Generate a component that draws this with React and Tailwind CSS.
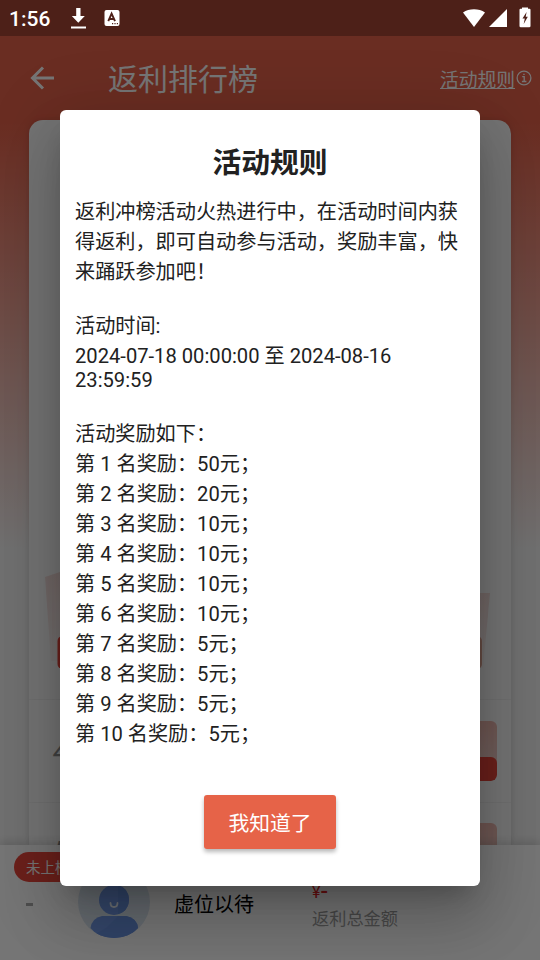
import React from "react";

const rewards = ["50", "20", "10", "10", "10", "10", "5", "5", "5", "5"];

function StatusBar() {
  return (
    <div className="absolute inset-x-0 top-0 flex h-9 items-center bg-black/[.27] pr-[9px] pl-[9px] text-white">
      <span className="w-[61px] pt-0.5 text-[21px] leading-[34px] font-medium">1:56</span>
      <svg width="17" height="22" viewBox="0 0 17 22" fill="currentColor" className="mt-px">
        <path d="M6.200 0h4.300v8h4.300L8.300 14.800 1.800 8h4.400zM1 18.500h15v2H1z" />
      </svg>
      <svg width="16" height="18" viewBox="0 0 16 18" className="ml-[17px]">
        <rect x="0.500" y="1" width="15" height="16" rx="2" fill="white" />
        <path d="M4.300 12.200 7.600 4.600 11 12.200M5.300 10h4.600" fill="none" stroke="#4e2119" strokeWidth="1.900" />
        <path d="M8 14h1.200v1.200H8zM10.400 14h1.200v1.200h-1.200zM12.800 14H14v1.200h-1.200z" fill="#4e2119" />
      </svg>
      <div className="flex-1" />
      <svg width="24" height="20" viewBox="0 0 24 20" fill="white" className="-mt-px">
        <path d="M1 4.500C7 .1 17 .1 23 4.500L12 19z" />
      </svg>
      <svg width="19" height="20" viewBox="0 0 19 20" fill="white" className="-mt-px ml-[3px]">
        <path d="M0 19 18 1v18z" />
      </svg>
      <svg width="12" height="21" viewBox="0 0 12 21" className="-mt-0.5 ml-[11px]">
        <path d="M3 1.800V.5h6v1.300h1.500q1 0 1 1V19q0 1.300-1.300 1.300H1.800Q.5 20.300.5 19V2.800q0-1 1-1z" fill="white" />
        <path d="M7.600 5 3.500 11.500h2.300L4.700 17 8.800 9.800H6.700z" fill="#4e2119" />
      </svg>
    </div>
  );
}

function Header() {
  return (
    <header className="mt-9 flex h-[84px] shrink-0 items-center pr-[8px] pl-[30px] text-white">
      <svg width="24" height="24" viewBox="0 0 24 24" fill="none" stroke="currentColor" strokeWidth="3">
        <path d="M24 12H2.500M13 1.500 2.500 12 13 22.500" />
      </svg>
      <h1 className="ml-[54px] pt-[4px] text-[30px] leading-[42px]">返利排行榜</h1>
      <div className="flex-1" />
      <span className="h-[21px] border-b border-white pt-[3px] text-[18.800px] leading-[21px]">活动规则</span>
      <svg width="16" height="16" viewBox="0 0 16 16" fill="none" stroke="currentColor" strokeWidth="1.300" className="ml-px">
        <circle cx="8" cy="8" r="6.900" />
        <path d="M6.200 6.600h2v4.900M5.900 11.500h4.500M7.200 4.300h1.500" />
      </svg>
    </header>
  );
}

function RewardTicket() {
  return (
    <div className="h-[60px] w-[88px] overflow-hidden rounded-md bg-gradient-to-b from-[#efb9b0] to-[#eed8d4]">
      <div className="mt-9 h-6 rounded-md bg-[#ea473b]" />
    </div>
  );
}

function Ranking() {
  return (
    <main className="mx-[29px] flex flex-1 flex-col overflow-hidden rounded-t-[14px] bg-[#fdfdfd] shadow-[0_0_6px_rgba(0,0,0,0.12)]">
      <div className="h-[580px] shrink-0 border-b border-[#f2f2f2] pt-[450px]">
        <svg width="482" height="120" viewBox="0 0 482 120">
          <defs>
            <linearGradient id="stand" x1="0" y1="0" x2="0" y2="1">
              <stop offset="0" stopColor="#f5dedb" />
              <stop offset="1" stopColor="#fbf5f4" />
            </linearGradient>
          </defs>
          <path d="M16 7 31 2H150V91H22z" fill="url(#stand)" />
          <path d="M330 23H461L454 98H330z" fill="url(#stand)" />
          <rect x="28.500" y="66" width="115" height="33" rx="5" fill="#ea473b" />
          <rect x="340" y="66" width="113" height="33" rx="5" fill="#dca594" />
        </svg>
      </div>
      <div className="flex h-[103px] shrink-0 items-center justify-between border-b border-[#f2f2f2] pr-[14px] pl-[24px]">
        <span className="pt-0.5 text-[29px] text-[#909090] italic">4</span>
        <RewardTicket />
      </div>
      <div className="flex h-[100px] shrink-0 items-center justify-between pr-[14px] pl-[24px]">
        <span className="text-[29px] text-[#909090] italic">5</span>
        <RewardTicket />
      </div>
    </main>
  );
}

function Avatar() {
  return (
    <svg width="72" height="72" viewBox="0 0 72 72">
      <defs>
        <clipPath id="avatar">
          <circle cx="36" cy="36" r="36" />
        </clipPath>
      </defs>
      <circle cx="36" cy="36" r="36" fill="#dce7f2" />
      <g clipPath="url(#avatar)" fill="#739be9">
        <circle cx="36" cy="34" r="15" />
        <path d="M24 50h24q11 2 12 12Q50 73 36 73T12.500 62Q14 52 24 50z" />
        <path d="M40 19q11 3 11 15-1 12-11 14zM28 62 40 50h8q11 2 12 12Q50 73 36 73 24 72 17 68z" fill="#6c94e2" />
      </g>
      <path d="M32.500 37q0 4 3.500 4t3.500-4" fill="none" stroke="#eef6ff" strokeWidth="1.800" strokeLinecap="round" />
    </svg>
  );
}

function MyRank() {
  return (
    <footer className="relative flex h-[115px] shrink-0 bg-white shadow-[0_-3px_9px_rgba(0,0,0,0.14)]">
      <div className="flex w-[78px] shrink-0 flex-col pt-[7px] pl-[14px]">
        <span className="h-[30px] w-[69px] rounded-full bg-[#ea473b] pl-3 text-[14.500px] leading-[33px] whitespace-nowrap text-white">
          未上榜
        </span>
        <span className="mt-[21px] ml-[12px] h-[3px] w-[7px] bg-[#aaaaaa]" />
      </div>
      <div className="pt-[21px]">
        <Avatar />
      </div>
      <span className="mt-[45px] ml-6 w-[138px] text-[20px] leading-[30px] text-black">虚位以待</span>
      <div className="flex flex-col pt-[37px]">
        <span className="flex h-[22px] items-center text-[16px] leading-[22px] text-[#e82525]">
          ¥<span className="-mt-0.5 text-[22px] font-medium">-</span>
        </span>
        <span className="mt-[2px] text-[17.200px] leading-[26px] text-[#9e9e9e]">返利总金额</span>
      </div>
    </footer>
  );
}

function RulesDialog() {
  return (
    <section className="flex h-[776px] w-[420px] flex-col rounded-[6px] bg-white px-[15px] text-[#212121] shadow-[0_16px_22px_-10px_rgba(0,0,0,0.2),0_36px_57px_4px_rgba(0,0,0,0.14),0_13px_69px_12px_rgba(0,0,0,0.12)]">
      <h2 className="mt-[32px] text-center text-[28.800px] leading-[42px] font-bold">活动规则</h2>
      <div className="mt-[13px] text-[20.160px] leading-[30px]">
        <p className="whitespace-nowrap">
          返利冲榜活动火热进行中，在活动时间内获
          <br />
          得返利，即可自动参与活动，奖励丰富，快
          <br />
          来踊跃参加吧！
        </p>
        <p className="mt-6">活动时间:</p>
        <p>2024-07-18 00:00:00 至 2024-08-16</p>
        <p className="-mt-[3px] h-6 leading-6">23:59:59</p>
        <p className="mt-[27px]">活动奖励如下：</p>
        {rewards.map((amount, i) => (
          <p key={i}>
            第 {i + 1} 名奖励：{amount}元；
          </p>
        ))}
      </div>
      <button className="mt-[46px] h-[54px] w-[132px] self-center rounded-[3px] bg-[#e66348] pt-[4px] text-[20.800px] leading-[50px] text-white shadow-[0_3px_4px_rgba(0,0,0,0.28)]">
        我知道了
      </button>
    </section>
  );
}

export default function App() {
  return (
    <div
      lang="zh-CN"
      className="relative flex h-[960px] w-[540px] flex-col overflow-hidden bg-[#f4f4f4] bg-[linear-gradient(180deg,#e8624a_0px,#e8624a_120px,#f4f4f4_550px)] font-[Roboto,'Noto_Sans_CJK_SC',sans-serif]"
    >
      <Header />
      <Ranking />
      <MyRank />
      <div className="absolute inset-0 flex justify-center bg-black/[.54] pt-[110px]">
        <RulesDialog />
      </div>
      <StatusBar />
    </div>
  );
}
